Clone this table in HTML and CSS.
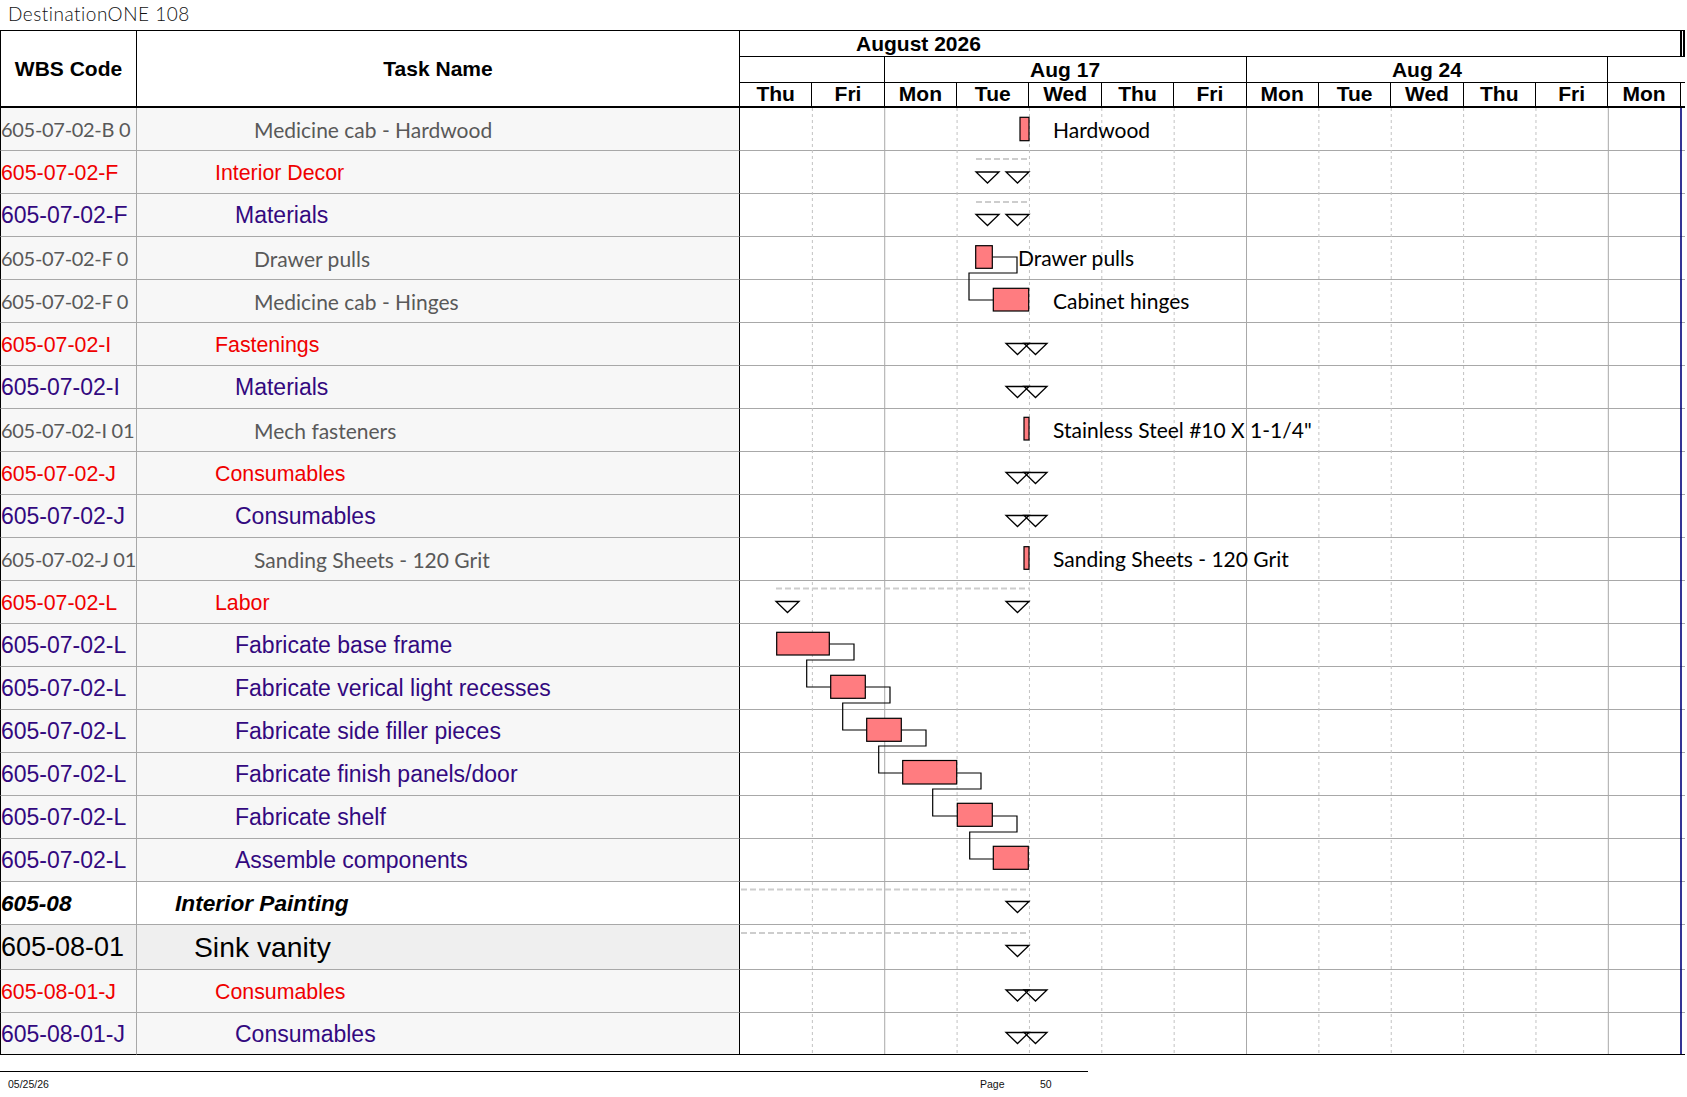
FILE: index.html
```html
<!DOCTYPE html>
<html>
<head>
<meta charset="utf-8">
<title>DestinationONE 108</title>
<link rel="stylesheet" href="styles.css">
</head>
<body>
<div class="title">DestinationONE 108</div>
<div class="sheet">
  <div class="head">
    <div class="h-wbs">WBS Code</div>
    <div class="h-task">Task Name</div>
    <div class="tscale">
      <div class="month">August 2026</div>
      <div class="weeks">
        <div class="wk"></div>
        <div class="wk">Aug 17</div>
        <div class="wk">Aug 24</div>
        <div class="wk last"></div>
      </div>
      <div class="days">
        <div class="day">Thu</div><div class="day">Fri</div><div class="day">Mon</div><div class="day">Tue</div><div class="day">Wed</div><div class="day">Thu</div><div class="day">Fri</div><div class="day">Mon</div><div class="day">Tue</div><div class="day">Wed</div><div class="day">Thu</div><div class="day">Fri</div><div class="day">Mon</div><div class="day fill"></div>
      </div>
    </div>
  </div>
  <div class="body">
    <div class="row leaf"><div class="c-wbs"><span>605-07-02-B 0</span></div><div class="c-task lv4">Medicine cab - Hardwood</div><div class="c-gantt"></div></div>
    <div class="row sum"><div class="c-wbs"><span>605-07-02-F</span></div><div class="c-task lv2">Interior Decor</div><div class="c-gantt"></div></div>
    <div class="row grp"><div class="c-wbs"><span>605-07-02-F</span></div><div class="c-task lv3">Materials</div><div class="c-gantt"></div></div>
    <div class="row leaf"><div class="c-wbs"><span>605-07-02-F 0</span></div><div class="c-task lv4">Drawer pulls</div><div class="c-gantt"></div></div>
    <div class="row leaf"><div class="c-wbs"><span>605-07-02-F 0</span></div><div class="c-task lv4">Medicine cab - Hinges</div><div class="c-gantt"></div></div>
    <div class="row sum"><div class="c-wbs"><span>605-07-02-I</span></div><div class="c-task lv2">Fastenings</div><div class="c-gantt"></div></div>
    <div class="row grp"><div class="c-wbs"><span>605-07-02-I</span></div><div class="c-task lv3">Materials</div><div class="c-gantt"></div></div>
    <div class="row leaf"><div class="c-wbs"><span>605-07-02-I 01</span></div><div class="c-task lv4">Mech fasteners</div><div class="c-gantt"></div></div>
    <div class="row sum"><div class="c-wbs"><span>605-07-02-J</span></div><div class="c-task lv2">Consumables</div><div class="c-gantt"></div></div>
    <div class="row grp"><div class="c-wbs"><span>605-07-02-J</span></div><div class="c-task lv3">Consumables</div><div class="c-gantt"></div></div>
    <div class="row leaf"><div class="c-wbs"><span>605-07-02-J 01</span></div><div class="c-task lv4">Sanding Sheets - 120 Grit</div><div class="c-gantt"></div></div>
    <div class="row sum"><div class="c-wbs"><span>605-07-02-L</span></div><div class="c-task lv2">Labor</div><div class="c-gantt"></div></div>
    <div class="row grp"><div class="c-wbs"><span>605-07-02-L</span></div><div class="c-task lv3">Fabricate base frame</div><div class="c-gantt"></div></div>
    <div class="row grp"><div class="c-wbs"><span>605-07-02-L</span></div><div class="c-task lv3">Fabricate verical light recesses</div><div class="c-gantt"></div></div>
    <div class="row grp"><div class="c-wbs"><span>605-07-02-L</span></div><div class="c-task lv3">Fabricate side filler pieces</div><div class="c-gantt"></div></div>
    <div class="row grp"><div class="c-wbs"><span>605-07-02-L</span></div><div class="c-task lv3">Fabricate finish panels/door</div><div class="c-gantt"></div></div>
    <div class="row grp"><div class="c-wbs"><span>605-07-02-L</span></div><div class="c-task lv3">Fabricate shelf</div><div class="c-gantt"></div></div>
    <div class="row grp"><div class="c-wbs"><span>605-07-02-L</span></div><div class="c-task lv3">Assemble components</div><div class="c-gantt"></div></div>
    <div class="row phase"><div class="c-wbs"><span>605-08</span></div><div class="c-task lv0">Interior Painting</div><div class="c-gantt"></div></div>
    <div class="row sub"><div class="c-wbs"><span>605-08-01</span></div><div class="c-task lv1">Sink vanity</div><div class="c-gantt"></div></div>
    <div class="row sum"><div class="c-wbs"><span>605-08-01-J</span></div><div class="c-task lv2">Consumables</div><div class="c-gantt"></div></div>
    <div class="row grp lastrow"><div class="c-wbs"><span>605-08-01-J</span></div><div class="c-task lv3">Consumables</div><div class="c-gantt"></div></div>

    <svg class="chart" width="945" height="947" viewBox="740 108 945 947" xmlns="http://www.w3.org/2000/svg">
      <g class="gridlines">
        <line class="dash" x1="812.36" y1="108" x2="812.36" y2="1054"/>
        <line class="solid" x1="884.72" y1="108" x2="884.72" y2="1054"/>
        <line class="dash" x1="957.08" y1="108" x2="957.08" y2="1054"/>
        <line class="dash" x1="1029.44" y1="108" x2="1029.44" y2="1054"/>
        <line class="dash" x1="1101.8" y1="108" x2="1101.8" y2="1054"/>
        <line class="dash" x1="1174.16" y1="108" x2="1174.16" y2="1054"/>
        <line class="solid" x1="1246.52" y1="108" x2="1246.52" y2="1054"/>
        <line class="dash" x1="1318.88" y1="108" x2="1318.88" y2="1054"/>
        <line class="dash" x1="1391.24" y1="108" x2="1391.24" y2="1054"/>
        <line class="dash" x1="1463.6" y1="108" x2="1463.6" y2="1054"/>
        <line class="dash" x1="1535.96" y1="108" x2="1535.96" y2="1054"/>
        <line class="solid" x1="1608.32" y1="108" x2="1608.32" y2="1054"/>
        <line class="edge" x1="1681" y1="108" x2="1681" y2="1054"/>
      </g>
      <g class="sumlines">
        <line x1="976" y1="159" x2="1029" y2="159"/>
        <line x1="976" y1="202" x2="1029" y2="202"/>
        <line x1="776" y1="588.5" x2="1030" y2="588.5"/>
        <line x1="741" y1="889.5" x2="1029" y2="889.5"/>
        <line x1="741" y1="933" x2="1029" y2="933"/>
      </g>
      <g class="tri">
        <polygon points="976,172 999,172 987.5,183"/>
        <polygon points="1006,172 1029,172 1017.5,183"/>
        <polygon points="976,214.5 999,214.5 987.5,225.5"/>
        <polygon points="1006,214.5 1029,214.5 1017.5,225.5"/>
        <polygon points="1006,343.5 1029,343.5 1017.5,354.5"/>
        <polygon points="1024,343.5 1047,343.5 1035.5,354.5"/>
        <polygon points="1006,386.5 1029,386.5 1017.5,397.5"/>
        <polygon points="1024,386.5 1047,386.5 1035.5,397.5"/>
        <polygon points="1006,472.5 1029,472.5 1017.5,483.5"/>
        <polygon points="1024,472.5 1047,472.5 1035.5,483.5"/>
        <polygon points="1006,515.5 1029,515.5 1017.5,526.5"/>
        <polygon points="1024,515.5 1047,515.5 1035.5,526.5"/>
        <polygon points="776,601.5 799,601.5 787.5,612.5"/>
        <polygon points="1006,601.5 1029,601.5 1017.5,612.5"/>
        <polygon points="1006,901.5 1029,901.5 1017.5,912.5"/>
        <polygon points="1006,945.5 1029,945.5 1017.5,956.5"/>
        <polygon points="1006,990 1029,990 1017.5,1001"/>
        <polygon points="1024,990 1047,990 1035.5,1001"/>
        <polygon points="1006,1032.5 1029,1032.5 1017.5,1043.5"/>
        <polygon points="1024,1032.5 1047,1032.5 1035.5,1043.5"/>
      </g>
      <g class="links">
        <polyline points="992.3,257 1017,257 1017,273 969,273 969,300 993.3,300"/>
        <polyline points="829.3,644 854,644 854,660 806.7,660 806.7,687 830.7,687"/>
        <polyline points="865.3,687 890,687 890,703 842.7,703 842.7,730 866.7,730"/>
        <polyline points="901.3,730 926,730 926,746 878.7,746 878.7,773 902.7,773"/>
        <polyline points="956.7,773 981,773 981,789 932.7,789 932.7,816 957.3,816"/>
        <polyline points="992.3,816 1017,816 1017,832 969.7,832 969.7,859 993.3,859"/>
      </g>
      <g class="bars">
        <rect x="1020" y="117.3" width="9" height="23.4"/>
        <rect x="975.7" y="245.7" width="16.6" height="22.6"/>
        <rect x="993.3" y="288.3" width="35.4" height="22.7"/>
        <rect x="1024" y="417.3" width="5" height="22.7"/>
        <rect x="1024" y="546.7" width="5" height="22.6"/>
        <rect x="776.7" y="632.3" width="52.6" height="22.7"/>
        <rect x="830.7" y="675.3" width="34.6" height="23"/>
        <rect x="866.7" y="718.3" width="34.6" height="23"/>
        <rect x="902.7" y="760.5" width="54" height="23.5"/>
        <rect x="957.3" y="803.3" width="35" height="23"/>
        <rect x="993.3" y="846.3" width="35" height="23"/>
      </g>
      <g class="labels">
        <text x="1053" y="137.5">Hardwood</text>
        <text x="1018" y="266">Drawer pulls</text>
        <text x="1053" y="309">Cabinet hinges</text>
        <text x="1053" y="438">Stainless Steel #10 X 1-1/4"</text>
        <text x="1053" y="567">Sanding Sheets - 120 Grit</text>
      </g>
    </svg>
  </div>
</div>
<div class="footer">
  <div class="f-date">05/25/26</div>
  <div class="f-page">Page</div>
  <div class="f-num">50</div>
</div>
</body>
</html>
```

FILE: styles.css
```css
* {
  box-sizing: border-box;
  margin: 0;
  padding: 0;
}

html, body {
  background: #ffffff;
}

body {
  width: 1687px;
  height: 1097px;
  overflow: hidden;
  font-family: "Liberation Sans", Arial, sans-serif;
  color: #000;
}

.title {
  height: 30px;
  padding: 3px 0 0 8px;
  font-family: "Lato", "DejaVu Sans", sans-serif;
  font-weight: 300;
  font-size: 19px;
  line-height: 22px;
  letter-spacing: 0.5px;
  color: #111;
}

.sheet {
  width: 1685px;
}

/* ---------- header ---------- */
.head {
  display: grid;
  grid-template-columns: 137px 603px 945px;
  height: 78px;
  border-top: 1px solid #000;
  border-bottom: 2px solid #000;
  font-weight: bold;
  font-size: 21px;
}

.h-wbs,
.h-task {
  display: flex;
  align-items: center;
  justify-content: center;
  padding-top: 1px;
  border-right: 1px solid #000;
}

.h-wbs {
  border-left: 1px solid #000;
}

.tscale {
  display: flex;
  flex-direction: column;
}

.month {
  height: 26px;
  line-height: 25px;
  padding-left: 116px;
  border-bottom: 1px solid #000;
  border-right: 5px double #000;
}

.weeks {
  height: 26px;
  display: grid;
  grid-template-columns: 144.72px 361.8px 361.8px 1fr;
  border-bottom: 1px solid #000;
}

.wk {
  border-right: 1px solid #000;
  text-align: center;
  line-height: 25px;
}

.wk.last {
  border-right: none;
}

.days {
  height: 23px;
  display: grid;
  grid-template-columns: repeat(13, 72.36px) 1fr;
}

.day {
  border-right: 1px solid #000;
  text-align: center;
  line-height: 22px;
}

.day.fill {
  border-right: none;
}

/* ---------- body rows ---------- */
.body {
  position: relative;
}

.row {
  display: grid;
  grid-template-columns: 137px 603px 945px;
  height: 43px;
}

.row > div {
  border-bottom: 1px solid #a8a8a8;
}

.row.lastrow {
  height: 42px;
}

.row.lastrow > div {
  border-bottom-color: #000;
}

.c-wbs {
  display: flex;
  align-items: center;
  border-left: 1px solid #000;
  border-right: 1px solid #a8a8a8;
  background: #f7f7f7;
  overflow: hidden;
}

.c-wbs span {
  display: block;
  white-space: nowrap;
}

.c-task {
  display: flex;
  align-items: center;
  border-right: 1px solid #000;
  background: #f7f7f7;
  overflow: hidden;
  white-space: nowrap;
}

.c-gantt {
  background: #ffffff;
}

.lv0 { padding-left: 38px; }
.lv1 { padding-left: 57px; }
.lv2 { padding-left: 78px; }
.lv3 { padding-left: 98px; }
.lv4 { padding-left: 117px; }

.leaf {
  color: #595959;
  font-family: "Lato", "Carlito", sans-serif;
  font-size: 21px;
}

.leaf .c-wbs span {
  font-size: 20px;
  letter-spacing: -0.3px;
}

.sum {
  color: #f00000;
  font-size: 21.33px;
}

.sum .c-wbs,
.sum .c-task {
  padding-top: 2px;
}

.grp {
  color: #33097f;
  font-size: 23px;
}

.grp .c-wbs,
.grp .c-task {
  padding-top: 1px;
}

.phase {
  font-weight: bold;
  font-style: italic;
  font-size: 22.67px;
}

.phase .c-wbs,
.phase .c-task {
  background: #ffffff;
}

.sub {
  height: 45px;
  font-size: 27px;
}

.sub .c-task {
  font-size: 28.3px;
}

.sub .c-wbs,
.sub .c-task {
  background: #efefef;
  padding-top: 1px;
}

/* ---------- chart overlay ---------- */
.chart {
  position: absolute;
  left: 740px;
  top: 0;
  pointer-events: none;
}

.gridlines line {
  stroke-width: 1;
}

.gridlines .dash {
  stroke: #c2c2c2;
  stroke-dasharray: 3 3;
}

.gridlines .solid {
  stroke: #a8a8a8;
}

.gridlines .edge {
  stroke: #00007a;
  stroke-width: 1.6;
}

.sumlines line {
  stroke: #cdcdcd;
  stroke-width: 2;
  stroke-dasharray: 6 3;
}

.tri polygon {
  fill: none;
  stroke: #000;
  stroke-width: 1.3;
  stroke-linejoin: miter;
}

.links polyline {
  fill: none;
  stroke: #000;
  stroke-width: 1.2;
}

.bars rect {
  fill: #ff7c80;
  stroke: #000;
  stroke-width: 1.2;
}

.labels text {
  font-family: "Lato", "Carlito", sans-serif;
  font-size: 21px;
  fill: #000;
}

/* ---------- footer ---------- */
.footer {
  margin-top: 16px;
  width: 1088px;
  height: 26px;
  border-top: 1px solid #000;
  display: flex;
  padding: 6px 0 0 8px;
  font-size: 10.5px;
  line-height: 13px;
  color: #111;
}

.f-date {
  width: 972px;
}

.f-page {
  width: 60px;
}
```
